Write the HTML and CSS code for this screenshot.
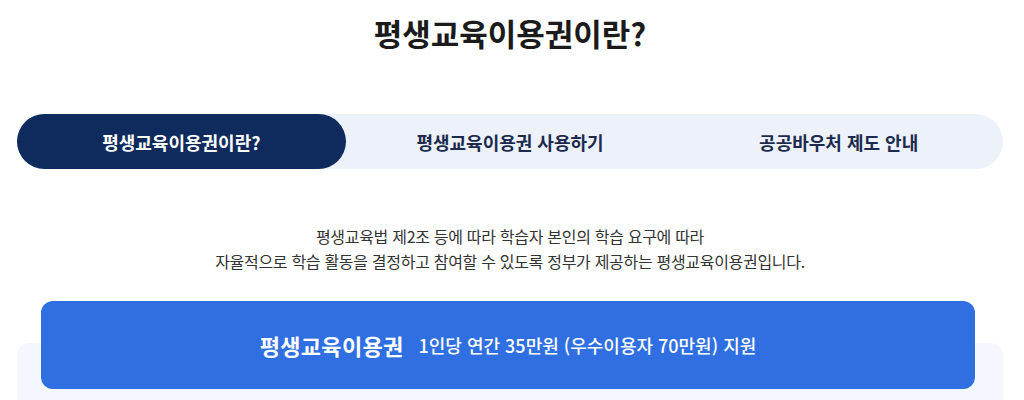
FILE: index.html
```html
<!DOCTYPE html>
<html lang="ko">
<head>
    <meta charset="UTF-8">
    <meta name="viewport" content="width=device-width, initial-scale=1.0">
    <title>평생교육이용권이란?</title>
    <link rel="stylesheet" href="styles.css">
</head>
<body>
    <div class="wrap">
        <h2 class="page-title">평생교육이용권이란?</h2>

        <ul class="tabs">
            <li class="tab active">평생교육이용권이란?</li>
            <li class="tab">평생교육이용권 사용하기</li>
            <li class="tab">공공바우처 제도 안내</li>
        </ul>

        <p class="intro">
            평생교육법 제2조 등에 따라 학습자 본인의 학습 요구에 따라<br>
            자율적으로 학습 활동을 결정하고 참여할 수 있도록 정부가 제공하는 평생교육이용권입니다.
        </p>

        <div class="support">
            <div class="support-head">
                <strong>평생교육이용권</strong>
                <span>1인당 연간 35만원 (우수이용자 70만원) 지원</span>
            </div>
            <div class="support-body"></div>
        </div>
    </div>
</body>
</html>
```

FILE: styles.css
```css
body {
    margin: 0;
    font-family: "Noto Sans CJK KR", "Noto Sans", sans-serif;
    background: #fff;
    color: #222;
}
.wrap {
    width: 986px;
    margin-left: 17px;
}
.page-title {
    margin: 0;
    padding-top: 13px;
    font-size: 31px;
    line-height: 40px;
    font-weight: 700;
    letter-spacing: 0;
    text-align: center;
    color: #1b1b1b;
}
.tabs {
    list-style: none;
    margin: 61px 0 0;
    padding: 0;
    display: grid;
    grid-template-columns: repeat(3, 1fr);
    height: 55px;
    background: #edf2fa;
    border-radius: 28px;
}
.tab {
    display: flex;
    justify-content: center;
    align-items: center;
    font-size: 18px;
    font-weight: 700;
    letter-spacing: 0;
    color: #1c2b4d;
    border-radius: 28px;
    cursor: pointer;
}
.tab.active {
    background: #0f2b5d;
    color: #fff;
}
.intro {
    margin: 55px 0 0;
    font-size: 16px;
    line-height: 25px;
    text-align: center;
    color: #333;
    letter-spacing: -0.3px;
}
.support {
    margin-top: 27px;
}
.support-head {
    position: relative;
    z-index: 1;
    margin: 0 28px 0 24px;
    height: 88px;
    display: flex;
    justify-content: center;
    align-items: center;
    gap: 15px;
    background: #2f6fe2;
    border-radius: 12px;
    color: #fff;
}
.support-head strong {
    font-size: 22px;
    font-weight: 700;
    letter-spacing: 0.3px;
}
.support-head span {
    font-size: 18px;
    font-weight: 500;
    letter-spacing: 0;
}
.support-body {
    margin-top: -46px;
    height: 120px;
    background: #f4f8fe;
    border-radius: 12px;
}
```
